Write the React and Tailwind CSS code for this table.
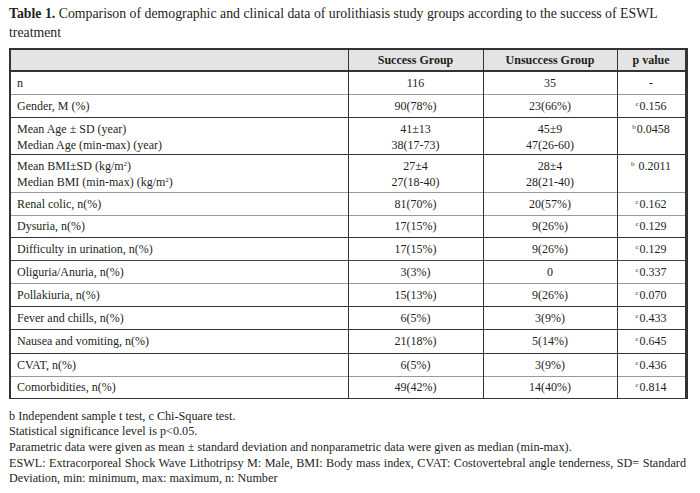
import React from "react";

const rows = [
  { label: ["n"], s: ["116"], u: ["35"], p: "-", sup: "", h: "h-[23px]", b: "border-b-[#9a9a9a]" },
  { label: ["Gender, M (%)"], s: ["90(78%)"], u: ["23(66%)"], p: "0.156", sup: "c", h: "h-[23px]", b: "border-b-[#333]" },
  { label: ["Mean Age ± SD (year)", "Median Age (min-max) (year)"], s: ["41±13", "38(17-73)"], u: ["45±9", "47(26-60)"], p: "0.0458", sup: "b", h: "h-[37px]", b: "border-b-[#333]" },
  { label: ["Mean BMI±SD (kg/m²)", "Median BMI (min-max) (kg/m²)"], s: ["27±4", "27(18-40)"], u: ["28±4", "28(21-40)"], p: " 0.2011", sup: "b", h: "h-[38px]", b: "border-b-[#9a9a9a]" },
  { label: ["Renal colic, n(%)"], s: ["81(70%)"], u: ["20(57%)"], p: "0.162", sup: "c", h: "h-[23px]", b: "border-b-[#9a9a9a]" },
  { label: ["Dysuria, n(%)"], s: ["17(15%)"], u: ["9(26%)"], p: "0.129", sup: "c", h: "h-[22px]", b: "border-b-[#333]" },
  { label: ["Difficulty in urination, n(%)"], s: ["17(15%)"], u: ["9(26%)"], p: "0.129", sup: "c", h: "h-[23px]", b: "border-b-[#444]" },
  { label: ["Oliguria/Anuria, n(%)"], s: ["3(3%)"], u: ["0"], p: "0.337", sup: "c", h: "h-[23px]", b: "border-b-[#9a9a9a]" },
  { label: ["Pollakiuria, n(%)"], s: ["15(13%)"], u: ["9(26%)"], p: "0.070", sup: "c", h: "h-[23px]", b: "border-b-[#333]" },
  { label: ["Fever and chills, n(%)"], s: ["6(5%)"], u: ["3(9%)"], p: "0.433", sup: "c", h: "h-[23px]", b: "border-b-[#333]" },
  { label: ["Nausea and vomiting, n(%)"], s: ["21(18%)"], u: ["5(14%)"], p: "0.645", sup: "c", h: "h-[24px]", b: "border-b-[#333]" },
  { label: ["CVAT, n(%)"], s: ["6(5%)"], u: ["3(9%)"], p: "0.436", sup: "c", h: "h-[23px]", b: "border-b-[#9a9a9a]" },
  { label: ["Comorbidities, n(%)"], s: ["49(42%)"], u: ["14(40%)"], p: "0.814", sup: "c", h: "h-[22px]", b: "border-b-[#333]" },
];

function Lines({ items }) {
  return items.map((t, i) => (
    <div key={i} className="leading-[16px]">
      {t.includes("²") ? (
        <>
          {t.split("²")[0]}
          <sup className="text-[7px] relative -top-[4px]">2</sup>
          {t.split("²")[1]}
        </>
      ) : (
        t
      )}
    </div>
  ));
}

export default function App() {
  return (
    <div
      className="w-[700px] h-[493px] bg-white text-[#231f20] overflow-hidden"
      style={{ fontFamily: '"Liberation Serif", "Times New Roman", serif' }}
    >
      <div className="pl-[9px] pt-[4px] text-[13.8px] leading-[19px]">
        <span className="font-bold">Table 1.</span> Comparison of demographic and clinical data of urolithiasis study groups according to the success of ESWL
        <br />
        treatment
      </div>
      <table className="ml-[9px] mt-[6px] table-fixed border-collapse text-[12px] border-l-2 border-r-[3px] border-l-[#333] border-r-[#333]">
        <colgroup>
          <col className="w-[338px]" />
          <col className="w-[135px]" />
          <col className="w-[134px]" />
          <col className="w-[69px]" />
        </colgroup>
        <thead>
          <tr className="h-[22px] bg-[#e4e4e4] border-t-2 border-t-[#333] border-b-2 border-b-[#333]">
            <th className="border-r border-r-[#333]"></th>
            <th className="border-r border-r-[#333] font-bold text-center">Success Group</th>
            <th className="border-r border-r-[#333] font-bold text-center">Unsuccess Group</th>
            <th className="font-bold text-center">p value</th>
          </tr>
        </thead>
        <tbody>
          {rows.map((r, i) => (
            <tr key={i} className={`${r.h} border-b ${r.b}`}>
              <td className={`border-r border-r-[#333] pl-[6px] ${r.label.length > 1 ? "align-top pt-[3px]" : "align-middle"}`}>
                <Lines items={r.label} />
              </td>
              <td className={`border-r border-r-[#333] text-center ${r.label.length > 1 ? "align-top pt-[3px]" : "align-middle"}`}>
                <Lines items={r.s} />
              </td>
              <td className={`border-r border-r-[#333] text-center ${r.label.length > 1 ? "align-top pt-[3px]" : "align-middle"}`}>
                <Lines items={r.u} />
              </td>
              <td className={`text-center ${r.label.length > 1 ? "align-top pt-[3px]" : "align-middle"}`}>
                <div className="leading-[16px]">
                  {r.sup && <sup className="text-[7px] relative -top-[4px] mr-[1px]">{r.sup}</sup>}
                  {r.p}
                </div>
              </td>
            </tr>
          ))}
        </tbody>
      </table>
      <div className="pl-[9px] pr-[14px] pt-[10px] text-[12.2px] leading-[15.7px]">
        <div>b Independent sample t test, c Chi-Square test.</div>
        <div>Statistical significance level is p&lt;0.05.</div>
        <div>Parametric data were given as mean ± standard deviation and nonparametric data were given as median (min-max).</div>
        <div className="text-justify [text-align-last:justify]">
          ESWL: Extracorporeal Shock Wave Lithotripsy M: Male, BMI: Body mass index, CVAT: Costovertebral angle tenderness, SD= Standard
        </div>
        <div>Deviation, min: minimum, max: maximum, n: Number</div>
      </div>
    </div>
  );
}
